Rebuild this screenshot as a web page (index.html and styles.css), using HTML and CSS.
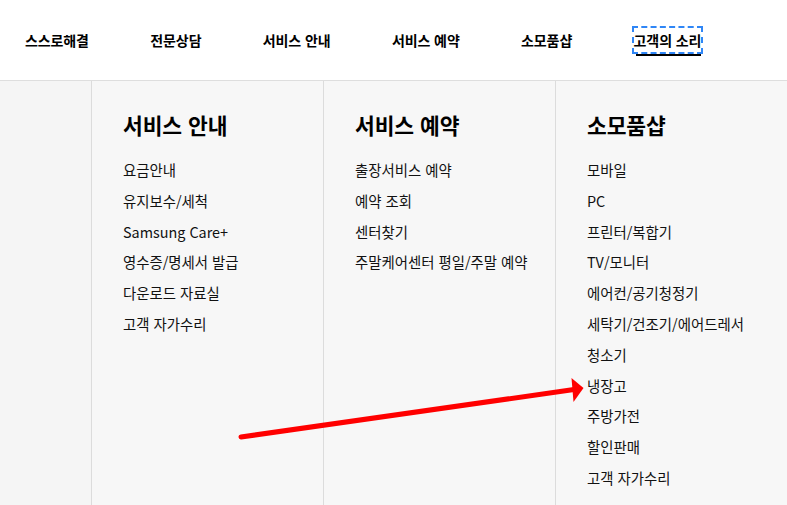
FILE: index.html
```html
<!DOCTYPE html>
<html lang="ko">
<head>
<meta charset="utf-8">
<title>메뉴</title>
<link rel="stylesheet" href="styles.css">
</head>
<body>
<header class="gnb">
  <a class="gnb-item">스스로해결</a>
  <a class="gnb-item">전문상담</a>
  <a class="gnb-item">서비스 안내</a>
  <a class="gnb-item">서비스 예약</a>
  <a class="gnb-item">소모품샵</a>
  <a class="gnb-item is-focus">고객의 소리</a>
</header>
<main class="mega">
  <div class="spacer"></div>
  <section class="col">
    <h2 class="col-title">서비스 안내</h2>
    <ul class="col-list">
      <li>요금안내</li>
      <li>유지보수/세척</li>
      <li>Samsung Care+</li>
      <li>영수증/명세서 발급</li>
      <li>다운로드 자료실</li>
      <li>고객 자가수리</li>
    </ul>
  </section>
  <section class="col">
    <h2 class="col-title">서비스 예약</h2>
    <ul class="col-list">
      <li>출장서비스 예약</li>
      <li>예약 조회</li>
      <li>센터찾기</li>
      <li>주말케어센터 평일/주말 예약</li>
    </ul>
  </section>
  <section class="col">
    <h2 class="col-title">소모품샵</h2>
    <ul class="col-list">
      <li>모바일</li>
      <li>PC</li>
      <li>프린터/복합기</li>
      <li>TV/모니터</li>
      <li>에어컨/공기청정기</li>
      <li>세탁기/건조기/에어드레서</li>
      <li>청소기</li>
      <li>냉장고</li>
      <li>주방가전</li>
      <li>할인판매</li>
      <li>고객 자가수리</li>
    </ul>
  </section>
</main>
<svg class="arrow" width="787" height="505" viewBox="0 0 787 505">
  <line x1="241" y1="437" x2="574" y2="389.5" stroke="#ff0000" stroke-width="5" stroke-linecap="round"/>
  <polygon points="571.5,378 583.5,388 573.5,402" fill="#ff0000"/>
</svg>
</body>
</html>
```
FILE: styles.css
```css
* { box-sizing: border-box; }
html, body {
  margin: 0;
  padding: 0;
  width: 787px;
  height: 505px;
  overflow: hidden;
  background: #f7f7f7;
  font-family: "Noto Sans CJK KR", "Noto Sans", sans-serif;
  color: #111;
}
.gnb {
  height: 81px;
  background: #fff;
  border-bottom: 1px solid #dedede;
  display: flex;
  align-items: center;
  padding-left: 25px;
  gap: 61.4px;
}
.gnb-item {
  position: relative;
  font-size: 14px;
  font-weight: 700;
  line-height: 24px;
  letter-spacing: -0.1px;
  color: #000;
  white-space: nowrap;
  margin-top: -1px;
}
.gnb-item.is-focus {
  outline: 2px dashed #2f86f6;
  outline-offset: 0;
}
.gnb-item.is-focus::after {
  content: "";
  position: absolute;
  left: 2px;
  right: 0;
  bottom: -4px;
  height: 2px;
  background: #000;
}
.mega {
  display: grid;
  grid-template-columns: 91px 232px 232px 1fr;
  height: 424px;
}
.spacer { background: #f5f5f5; }
.col {
  border-left: 1px solid #dcdcdc;
  background: #f7f7f7;
  padding: 29px 0 0 31px;
}
.col-title {
  margin: 0;
  font-size: 21.5px;
  font-weight: 700;
  line-height: 30px;
  color: #000;
  letter-spacing: -0.1px;
}
.col-list {
  list-style: none;
  margin: 15px 0 0;
  padding: 0;
}
.col-list li {
  font-size: 14.4px;
  line-height: 30.8px;
  color: #111;
  white-space: nowrap;
}
.arrow {
  position: absolute;
  left: 0;
  top: 0;
  pointer-events: none;
}
```
